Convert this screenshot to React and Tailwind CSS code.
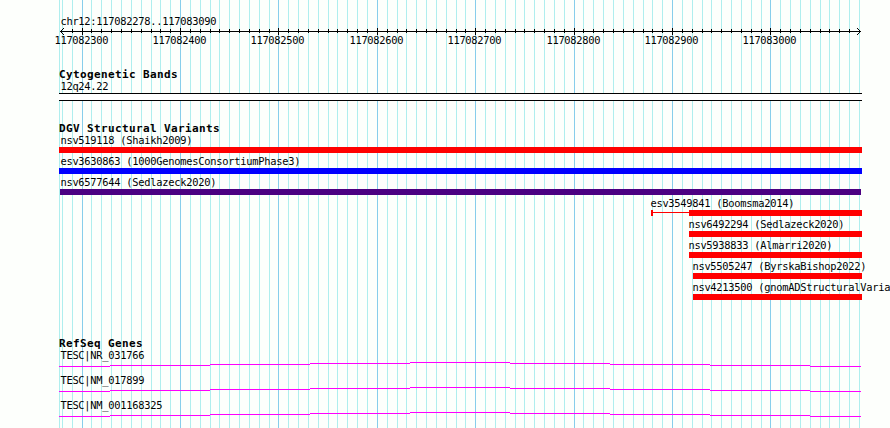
import React from "react";

const START = 117082278;
const LEFT = 60;
const SCALE = 800 / 813;

const toX = (pos) => Math.floor(LEFT + 0.5 + (pos - START) * SCALE);

const ticks = [];
for (let pos = 117082280; pos <= 117083090; pos += 10) {
  ticks.push({ pos, x: toX(pos), major: pos % 100 === 0 });
}
const majors = ticks.filter((t) => t.major);

const variants = [
  { name: "nsv519118 (Shaikh2009)", text: 60, left: 59, width: 803, color: "#ff0000" },
  { name: "esv3630863 (1000GenomesConsortiumPhase3)", text: 60, left: 59, width: 803, color: "#0000ff" },
  { name: "nsv6577644 (Sedlazeck2020)", text: 60, left: 60, width: 801, color: "#4b0082" },
  { name: "esv3549841 (Boomsma2014)", text: 650, left: 689, width: 173, color: "#ff0000", tail: 651 },
  { name: "nsv6492294 (Sedlazeck2020)", text: 688, left: 689, width: 173, color: "#ff0000" },
  { name: "nsv5938833 (Almarri2020)", text: 688, left: 689, width: 173, color: "#ff0000" },
  { name: "nsv5505247 (ByrskaBishop2022)", text: 692, left: 693, width: 169, color: "#ff0000" },
  { name: "nsv4213500 (gnomADStructuralVaria", text: 692, left: 693, width: 169, color: "#ff0000" },
];

const genes = ["TESC|NR_031766", "TESC|NM_017899", "TESC|NM_001168325"];

// [x, width, y] of every step in the intron line
const steps = [
  [59, 51, 4],
  [110, 100, 3],
  [210, 100, 2],
  [310, 100, 1],
  [410, 100, 0],
  [510, 100, 1],
  [610, 100, 2],
  [710, 100, 3],
  [810, 51, 4],
];

const Grid = () => (
  <svg width="890" height="428" shapeRendering="crispEdges" className="col-start-1 row-start-1 block">
    <rect x="59" y="0" width="1" height="428" fill="#afeeee" />
    {ticks.map((t) => (
      <rect key={t.pos} x={t.x} y="0" width="1" height="428" fill={t.major ? "#87ceeb" : "#afeeee"} />
    ))}
  </svg>
);

const Label = ({ children }) => (
  <div className="h-[12px] pl-[0.4px] text-[10.4px] leading-[10px] tracking-[-0.261px] whitespace-pre">{children}</div>
);

const Heading = ({ children }) => (
  <h2 className="h-[12px] pl-[59px] text-[11px] leading-[12px] font-bold tracking-[0.378px] whitespace-pre">
    {children}
  </h2>
);

const Ruler = () => (
  <div className="h-[69px] pt-[16px]">
    <div className="pl-[60px]">
      <Label>chr12:117082278..117083090</Label>
    </div>
    <svg width="890" height="7" shapeRendering="crispEdges" className="block">
      <rect x="60" y="3" width="801" height="1" />
      {ticks
        .filter((t) => t.x > 64 && t.x < 857)
        .map((t) => (
          <rect key={t.pos} x={t.x} y={t.major ? 0 : 1} width="1" height={t.major ? 7 : 4} />
        ))}
      {[1, 2, 3].map((i) => (
        <g key={i}>
          <rect x={60 + i} y={3 - i} width="1" height="1" />
          <rect x={60 + i} y={3 + i} width="1" height="1" />
          <rect x={860 - i} y={3 - i} width="1" height="1" />
          <rect x={860 - i} y={3 + i} width="1" height="1" />
        </g>
      ))}
    </svg>
    <div className="flex">
      {majors.map((t, i) => (
        <div
          key={t.pos}
          className="w-[54px] shrink-0"
          style={{ marginLeft: i === 0 ? t.x - 28 : t.x - majors[i - 1].x - 54 }}
        >
          <Label>{t.pos}</Label>
        </div>
      ))}
    </div>
  </div>
);

const Variant = ({ name, text, left, width, color, tail }) => (
  <div className="h-[21px]">
    <div className="h-[12px]" style={{ paddingLeft: text }}>
      <Label>{name}</Label>
    </div>
    <div className="flex h-[6px]" style={{ paddingLeft: tail || left }}>
      {tail && (
        <div className="flex h-[6px]" style={{ width: left - tail }}>
          <div className="w-[2px] bg-[#ff0000]" />
          <div className="mt-[2px] h-px flex-1 bg-[#ff0000]" />
        </div>
      )}
      <div className="h-[6px] shrink-0" style={{ width, backgroundColor: color }} />
    </div>
  </div>
);

const Gene = ({ name }) => (
  <div className="h-[25px]">
    <div className="pl-[60px]">
      <Label>{name}</Label>
    </div>
    <svg width="890" height="5" shapeRendering="crispEdges" className="block">
      {steps.map(([x, w, y]) => (
        <rect key={x} x={x} y={y} width={w} height="1" fill="#ff00ff" />
      ))}
    </svg>
  </div>
);

const App = () => {
  return (
    <div className="grid h-[428px] w-[890px] overflow-hidden bg-[#fdfffc] font-['DejaVu_Sans_Mono',monospace] text-black">
      <Grid />
      <main className="col-start-1 row-start-1 h-[428px] w-[890px] overflow-hidden">
        <Ruler />
        <section className="h-[54px]">
          <Heading>Cytogenetic Bands</Heading>
          <div className="pl-[60px]">
            <Label>12q24.22</Label>
          </div>
          <div className="ml-[59px] h-[8px] w-[803px] border-y border-black bg-white" />
        </section>
        <section className="h-[215px]">
          <Heading>DGV Structural Variants</Heading>
          {variants.map((v) => (
            <Variant key={v.name} {...v} />
          ))}
        </section>
        <section>
          <Heading>RefSeq Genes</Heading>
          {genes.map((name) => (
            <Gene key={name} name={name} />
          ))}
        </section>
      </main>
    </div>
  );
};

export default App;
